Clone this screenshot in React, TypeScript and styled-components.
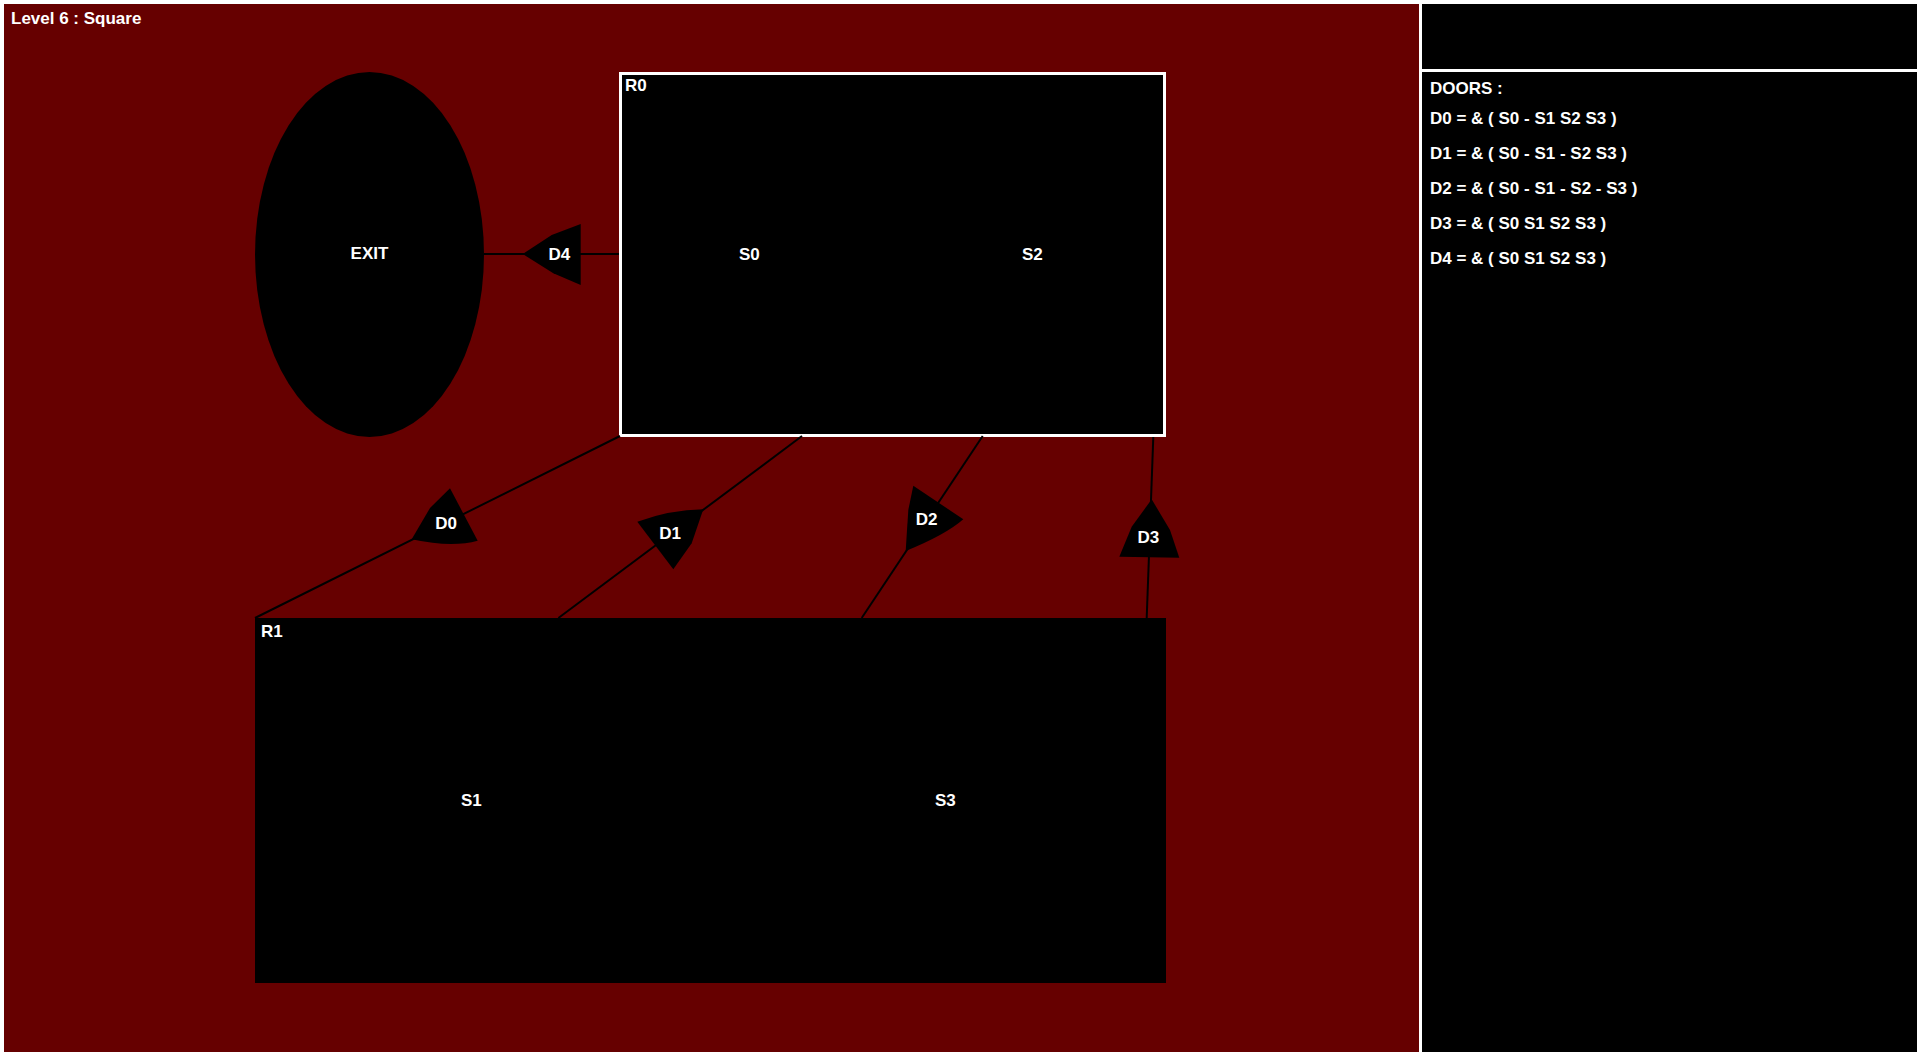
import React from "react";
import styled, { createGlobalStyle } from "styled-components";

const GlobalStyle = createGlobalStyle`
  html, body {
    margin: 0;
    padding: 0;
    background: #ffffff;
  }
  body {
    font-family: "Liberation Sans", Arial, sans-serif;
    font-weight: bold;
    font-size: 17px;
    line-height: 20px;
    color: #ffffff;
  }
`;

const Screen = styled.div`
  display: flex;
  gap: 3px;
  height: 100vh;
  box-sizing: border-box;
  padding: 4px 3px 3px 4px;
`;

const Board = styled.main`
  position: relative;
  flex: 1;
  background: #660000;
  overflow: hidden;
  padding: 5px 7px;
  box-sizing: border-box;
`;

const Title = styled.h1`
  margin: 0;
  font: inherit;
`;

const Sidebar = styled.aside`
  width: 495px;
  display: flex;
  flex-direction: column;
  gap: 3px;
`;

const InfoBox = styled.div`
  height: 65px;
  background: #000;
`;

const DoorPanel = styled.section`
  flex: 1;
  background: #000;
  padding: 7px 8px 0 8px;
  display: flex;
  flex-direction: column;
`;

const PanelHeading = styled.div`
  margin-bottom: 10px;
`;

const DoorList = styled.ul`
  list-style: none;
  margin: 0;
  padding: 0;
  display: flex;
  flex-direction: column;
  gap: 15px;
`;

const DoorRow = styled.li`
  white-space: pre;
`;

const Wires = styled.svg`
  position: absolute;
  inset: 0;
  width: 100%;
  height: 100%;
  pointer-events: none;
`;

const Exit = styled.div<{ $x: number; $y: number; $w: number; $h: number }>`
  position: absolute;
  left: ${(p) => p.$x}px;
  top: ${(p) => p.$y}px;
  width: ${(p) => p.$w}px;
  height: ${(p) => p.$h}px;
  border-radius: 50%;
  background: #000;
  display: flex;
  align-items: center;
  justify-content: center;
  padding-bottom: 1px;
  box-sizing: border-box;
`;

const Room = styled.div<{ $x: number; $y: number; $w: number; $h: number; $selected?: boolean }>`
  position: absolute;
  left: ${(p) => p.$x}px;
  top: ${(p) => p.$y}px;
  width: ${(p) => p.$w}px;
  height: ${(p) => p.$h}px;
  box-sizing: border-box;
  background: #000;
  border: 3px solid ${(p) => (p.$selected ? "#ffffff" : "#000000")};
`;

const RoomName = styled.div`
  padding: 1px 3px 0;
`;

const Sector = styled.div<{ $x: number }>`
  position: absolute;
  left: ${(p) => p.$x}px;
  top: 50%;
  transform: translate(-50%, -50%);
`;

type Door = { id: string; line: [number, number, number, number]; shape: string; label: [number, number] };

const doors: Door[] = [
  {
    id: "D4",
    line: [480, 250, 615, 250],
    shape: "M518.7,250 L547.7,231 L576.7,220 L576.7,281 L549.3,269.3 Z",
    label: [555.3, 250],
  },
  {
    id: "D0",
    line: [616, 432, 251, 614],
    shape: "M446,484.3 L426,504 L407.7,535.3 Q447.9,544 473.7,536.7 Z",
    label: [442, 519.3],
  },
  {
    id: "D1",
    line: [798, 432, 554.4, 614],
    shape: "M633.3,517.7 Q665.7,505.9 699.3,505.3 L687.7,539.3 L669.3,565.3 Z",
    label: [666, 529.3],
  },
  {
    id: "D2",
    line: [978.7, 432, 857.7, 614],
    shape: "M909.3,481.7 L959.3,515.3 Q941.5,530.9 901.7,547 L904.3,506 Z",
    label: [922.7, 515.3],
  },
  {
    id: "D3",
    line: [1149.3, 433, 1142.7, 614],
    shape: "M1147.7,495.3 L1166,526 L1175.3,553.7 L1115.3,552.7 L1127.7,522.7 Z",
    label: [1144.3, 533.3],
  },
];

const rules = [
  "D0 = & ( S0 - S1 S2 S3 )",
  "D1 = & ( S0 - S1 - S2 S3 )",
  "D2 = & ( S0 - S1 - S2 - S3 )",
  "D3 = & ( S0 S1 S2 S3 )",
  "D4 = & ( S0 S1 S2 S3 )",
];

export default function App() {
  return (
    <>
      <GlobalStyle />
      <Screen>
        <Board>
          <Title>Level 6 : Square</Title>
          <Exit $x={251} $y={68} $w={229} $h={365}>EXIT</Exit>
          <Room $x={615} $y={68} $w={547} $h={365} $selected>
            <RoomName>R0</RoomName>
            <Sector $x={127.4}>S0</Sector>
            <Sector $x={410.3}>S2</Sector>
          </Room>
          <Room $x={251} $y={614} $w={911} $h={365}>
            <RoomName>R1</RoomName>
            <Sector $x={213.4}>S1</Sector>
            <Sector $x={687.3}>S3</Sector>
          </Room>
          <Wires viewBox="0 0 1415 1048">
            {doors.map((d) => (
              <g key={d.id}>
                <line x1={d.line[0]} y1={d.line[1]} x2={d.line[2]} y2={d.line[3]} stroke="#000" strokeWidth={2} />
                <path d={d.shape} fill="#000" />
                <text
                  x={d.label[0]}
                  y={d.label[1] + 6}
                  textAnchor="middle"
                  fill="#fff"
                  fontFamily="'Liberation Sans', Arial, sans-serif"
                  fontWeight="bold"
                  fontSize={17}
                >
                  {d.id}
                </text>
              </g>
            ))}
          </Wires>
        </Board>
        <Sidebar>
          <InfoBox />
          <DoorPanel>
            <PanelHeading>DOORS :</PanelHeading>
            <DoorList>
              {rules.map((r) => (
                <DoorRow key={r}>{r}</DoorRow>
              ))}
            </DoorList>
          </DoorPanel>
        </Sidebar>
      </Screen>
    </>
  );
}
